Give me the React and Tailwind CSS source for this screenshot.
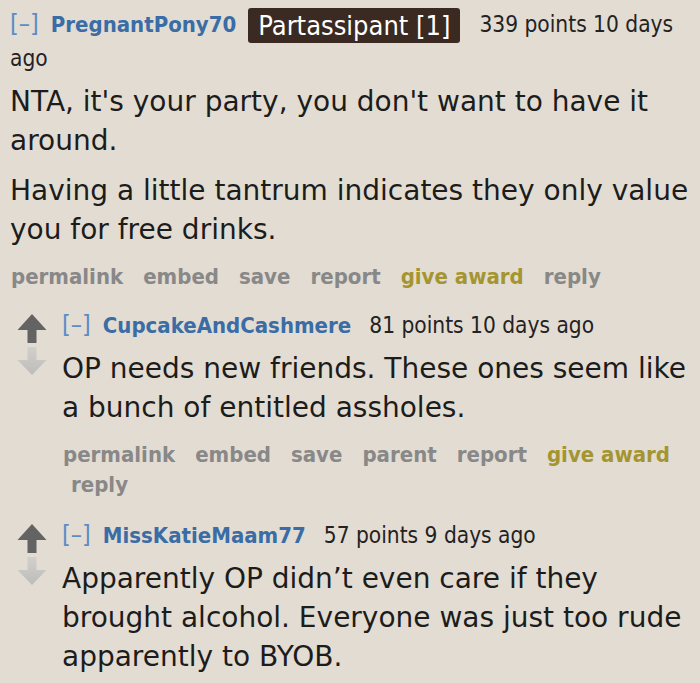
const meta = "font-['DejaVu_Sans_Condensed','DejaVu_Sans',sans-serif] font-stretch-condensed";
const body = "font-['DejaVu_Sans','Verdana',sans-serif]";

function UpArrow() {
    return (
        <svg width="30" height="29" viewBox="0 0 30 29" className="block">
            <polygon points="15,0 29.5,16 19.5,16 19.5,29 10.5,29 10.5,16 0.5,16" fill="#636363" />
        </svg>
    );
}

function DownArrow() {
    return (
        <svg width="30" height="28" viewBox="0 0 30 28" className="block">
            <defs>
                <linearGradient id="dg" x1="0" y1="0" x2="0" y2="1">
                    <stop offset="0" stopColor="#d2d0cc" />
                    <stop offset="1" stopColor="#bdbcba" />
                </linearGradient>
            </defs>
            <polygon points="10.5,0 19.5,0 19.5,13 29.5,13 15,28 0.5,13 10.5,13" fill="url(#dg)" />
        </svg>
    );
}

function Tagline({ name, flair, points, time }) {
    return (
        <div className={`${meta} text-[22.5px] leading-[31px] text-[#222]`}>
            <span className="text-[#5a8cc6] text-[25px] mr-[12px]">[–]</span>
            <span className={`font-bold text-[22px] text-[#3a6ca6] ${flair ? "mr-[12px]" : "mr-[18px]"}`}>{name}</span>
            {flair && (
                <span className="inline-block align-middle bg-[#3b2a22] text-white text-[27px] leading-[35px] px-[10px] rounded-[3px] mr-[19px]">
                    {flair}
                </span>
            )}
            <span>{points} points {time}</span>
        </div>
    );
}

function Buttons({ items }) {
    return (
        <ul className={`${meta} flex flex-wrap font-bold text-[22px] leading-[30px] text-[#888] mt-[13px]`}>
            {items.map((item, i) => (
                <li
                    key={item}
                    className={`${i === 0 ? "pl-[1px]" : "pl-[9px]"} pr-[11px] ${item === "give award" ? "text-[#a49530]" : ""}`}
                >
                    {item}
                </li>
            ))}
        </ul>
    );
}

function Body({ paragraphs }) {
    return (
        <div className={`${body} text-[28px] leading-[39px] text-[#1c1c1c] mt-[8px]`}>
            {paragraphs.map((p, i) => (
                <p key={i} className={i > 0 ? "mt-[11px]" : ""}>{p}</p>
            ))}
        </div>
    );
}

function Child({ name, points, time, paragraphs, buttons, top }) {
    return (
        <div className={`flex ${top}`}>
            <div className="w-[62px] shrink-0 pl-[17px] pt-[5px] flex flex-col gap-[4px]">
                <UpArrow />
                <DownArrow />
            </div>
            <div className="flex-1 min-w-0">
                <Tagline name={name} points={points} time={time} />
                <Body paragraphs={paragraphs} />
                {buttons && <Buttons items={buttons} />}
            </div>
        </div>
    );
}

export default function App() {
    return (
        <div className="w-[700px] h-[683px] overflow-hidden bg-[#e3dcd2]">
            <div className="pl-[10px] pt-[8px]">
                <Tagline name="PregnantPony70" flair="Partassipant [1]" points="339" time="10 days ago" />
                <Body
                    paragraphs={[
                        "NTA, it's your party, you don't want to have it around.",
                        "Having a little tantrum indicates they only value you for free drinks.",
                    ]}
                />
                <Buttons items={["permalink", "embed", "save", "report", "give award", "reply"]} />
            </div>
            <Child
                top="mt-[17px]"
                name="CupcakeAndCashmere"
                points="81"
                time="10 days ago"
                paragraphs={["OP needs new friends. These ones seem like a bunch of entitled assholes."]}
                buttons={["permalink", "embed", "save", "parent", "report", "give award", "reply"]}
            />
            <Child
                top="mt-[19px]"
                name="MissKatieMaam77"
                points="57"
                time="9 days ago"
                paragraphs={["Apparently OP didn’t even care if they brought alcohol. Everyone was just too rude apparently to BYOB."]}
            />
        </div>
    );
}
